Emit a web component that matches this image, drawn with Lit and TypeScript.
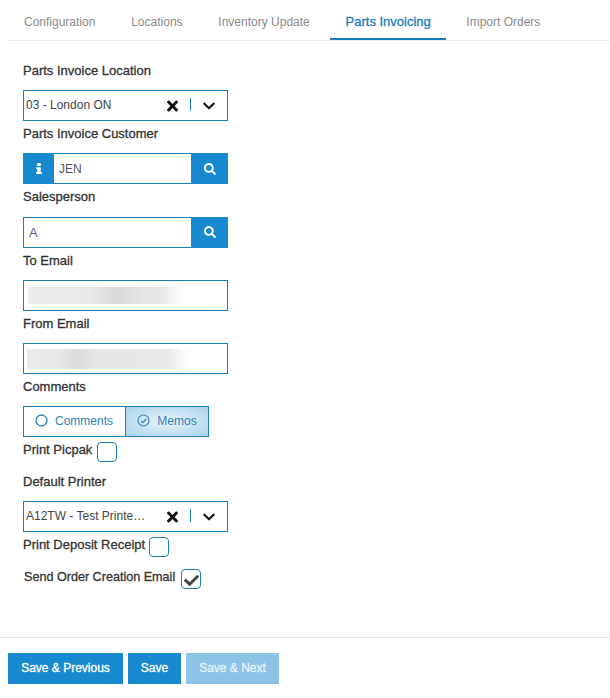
import {LitElement, html, css, svg} from 'lit';
import {customElement} from 'lit/decorators.js';

const timesIcon = html`<svg class="times" viewBox="0 0 352 512"><path d="M242.72 256l100.07-100.07c12.28-12.28 12.28-32.19 0-44.48l-22.24-22.24c-12.28-12.28-32.19-12.28-44.48 0L176 189.28 75.93 89.21c-12.28-12.28-32.19-12.28-44.48 0L9.21 111.45c-12.28 12.28-12.28 32.19 0 44.48L109.28 256 9.21 356.07c-12.28 12.28-12.28 32.19 0 44.48l22.24 22.24c12.28 12.28 32.2 12.28 44.48 0L176 322.72l100.07 100.07c12.28 12.28 32.2 12.28 44.48 0l22.24-22.24c12.28-12.28 12.28-32.19 0-44.48L242.72 256z"/></svg>`;
const chevronIcon = html`<svg class="chevron" viewBox="0 0 448 512"><path d="M207.029 381.476L12.686 187.132c-9.373-9.373-9.373-24.569 0-33.941l22.667-22.667c9.357-9.357 24.522-9.375 33.901-.04L224 284.505l154.745-154.021c9.379-9.335 24.544-9.317 33.901.04l22.667 22.667c9.373 9.373 9.373 24.569 0 33.941L240.971 381.476c-9.373 9.372-24.569 9.372-33.942 0z"/></svg>`;
const searchIcon = html`<svg class="search" viewBox="0 0 512 512"><path d="M505 442.7L405.3 343c-4.5-4.5-10.6-7-17-7H372c27.6-35.3 44-79.7 44-128C416 93.1 322.9 0 208 0S0 93.1 0 208s93.1 208 208 208c48.3 0 92.7-16.4 128-44v16.3c0 6.4 2.5 12.5 7 17l99.7 99.7c9.4 9.4 24.6 9.4 33.9 0l28.3-28.3c9.4-9.4 9.4-24.6.1-34zM208 336c-70.7 0-128-57.2-128-128 0-70.7 57.2-128 128-128 70.7 0 128 57.2 128 128 0 70.7-57.2 128-128 128z"/></svg>`;
const infoIcon = html`<svg class="info" viewBox="0 0 192 512" preserveAspectRatio="none"><path d="M20 424.229h20V279.771H20c-11.046 0-20-8.954-20-20V212c0-11.046 8.954-20 20-20h112c11.046 0 20 8.954 20 20v212.229h20c11.046 0 20 8.954 20 20V492c0 11.046-8.954 20-20 20H20c-11.046 0-20-8.954-20-20v-47.771c0-11.046 8.954-20 20-20zM96 0C56.235 0 24 32.235 24 72s32.235 72 72 72 72-32.235 72-72S135.764 0 96 0z"/></svg>`;
const checkPath = svg`<path d="M173.898 439.404l-166.4-166.4c-9.997-9.997-9.997-26.206 0-36.204l36.203-36.204c9.997-9.998 26.207-9.998 36.204 0L192 312.69 432.095 72.596c9.997-9.997 26.207-9.997 36.204 0l36.203 36.204c9.997 9.997 9.997 26.206 0 36.204l-294.4 294.401c-9.998 9.997-26.207 9.997-36.204-.001z"/>`;

const tabs = ['Configuration', 'Locations', 'Inventory Update', 'Parts Invoicing', 'Import Orders'];

@customElement('app-root')
export class AppRoot extends LitElement {
  static styles = css`
    :host {
      display: flex;
      flex-direction: column;
      min-height: 698px;
      font-family: "Liberation Sans", Arial, sans-serif;
      font-size: 12px;
      color: #333;
      background: #fff;
    }
    .tabs {
      display: flex;
      gap: 3.8px;
      margin-left: 8px;
      height: 41px;
      box-sizing: border-box;
      border-bottom: 1px solid #ececec;
    }
    .tab {
      padding: 15px 16px 0;
      height: 40px;
      box-sizing: border-box;
      color: #8a8a8a;
      line-height: 14px;
    }
    .tab.active {
      color: #1a7cb8;
      font-size: 13px;
      -webkit-text-stroke: 0.3px #1a7cb8;
      border-bottom: 2px solid #1a7cb8;
      width: 116px;
      white-space: nowrap;
      margin-right: 1px;
    }
    .form {
      padding: 22.75px 0 0 23px;
      width: 205px;
    }
    .label {
      height: 14.25px;
      line-height: 14px;
      font-size: 13px;
      -webkit-text-stroke: 0.3px #333;
      color: #333;
      white-space: nowrap;
    }
    .label + .box, .label + .toggle {
      margin-top: 12px;
    }
    .box + .label, .toggle + .label {
      margin-top: 6px;
    }
    .box {
      display: flex;
      align-items: center;
      box-sizing: border-box;
      height: 31px;
      border: 1px solid #1a7cb8;
      background: #fff;
    }
    .value {
      flex: 1;
      min-width: 0;
      padding: 0 0 2px 2px;
      white-space: nowrap;
      overflow: hidden;
      text-overflow: ellipsis;
      color: #444;
    }
    .actions {
      display: flex;
      align-items: center;
      flex: none;
      width: 80px;
      height: 100%;
    }
    .clear {
      width: 36px;
      padding-left: 7px;
      display: flex;
      justify-content: center;
    }
    .divider {
      width: 1px;
      height: 13px;
      margin-bottom: 2px;
      background: #1a7cb8;
    }
    .drop {
      flex: 1;
      display: flex;
      justify-content: center;
    }
    .times { width: 11px; height: 16px; fill: #111; }
    .chevron { width: 12px; height: 14px; fill: #111; margin-top: 1px; }
    .search { width: 12px; height: 12px; fill: #fff; display: block; }
    .info { width: 6px; height: 11px; fill: #fff; display: block; }
    .addon {
      flex: none;
      align-self: stretch;
      margin: -1px;
      display: flex;
      align-items: center;
      justify-content: center;
      background: #178acf;
    }
    .addon.left { width: 31px; margin-right: 0; }
    .addon.right { width: 37px; margin-left: 0; }
    .plain {
      flex: 1;
      padding-left: 5px;
      color: #555;
    }
    .salesperson { color: #5b5f8c; font-size: 13px; }
    .blur {
      height: 17px;
      border-radius: 1px;
    }
    .blur.to {
      margin-left: 4px;
      width: 156px;
      background: linear-gradient(90deg, #ececec 0, #e9e9e9 40%, #d9d9d9 56%, #e4e4e4 72%, #e8e8e8 85%, #fff 100%);
    }
    .blur.from {
      margin-left: 3px;
      width: 163px;
      height: 20px;
      background: linear-gradient(90deg, #ececec 0, #e6e6e6 20%, #dbdbdb 30%, #e6e6e6 42%, #e8e8e8 85%, #fff 100%);
    }
    .toggle {
      display: flex;
      box-sizing: border-box;
      height: 31px;
      width: 186px;
      color: #2d7fb5;
    }
    .opt {
      display: flex;
      align-items: center;
      justify-content: center;
      gap: 7px;
      box-sizing: border-box;
      border: 1px solid #1a7cb8;
    }
    .opt span { padding-bottom: 1px; }
    .opt.a { width: 103px; flex: none; padding-right: 1px; }
    .opt.b {
      width: 84px;
      margin-left: -1px;
      flex: none;
      background: radial-gradient(ellipse at center, #e9f4fa 0, #a9d3eb 100%);
    }
    .opt svg { width: 13px; height: 13px; fill: none; stroke: #2d7fb5; display: block; margin-bottom: 2px; }
    .check-row {
      display: flex;
      gap: 4px;
      height: 20px;
      line-height: 14px;
      white-space: nowrap;
    }
    .check-row span {
      padding-top: 1px;
      font-size: 13px;
      -webkit-text-stroke: 0.3px #333;
    }
    .checkbox {
      width: 20px;
      height: 20px;
      box-sizing: border-box;
      border: 1px solid #1a7cb8;
      border-radius: 4px;
      background: #fff;
      display: flex;
      align-items: center;
      justify-content: center;
    }
    .checkbox svg { width: 15px; height: 15px; fill: #444; margin-top: 2px; }
    .after-toggle { margin-top: 5px; gap: 5px; }
    .after-check { margin-top: 12.5px; }
    .after-box { margin-top: 5px; }
    .send { margin-top: 12px; gap: 6px; }
    .check-row.send span { margin-left: 1px; font-size: 12.6px; }
    .footer {
      margin-top: auto;
      display: flex;
      gap: 5px;
      padding: 15px 8px 14px;
      border-top: 1px solid #e4e4e4;
    }
    .btn {
      height: 31px;
      box-sizing: border-box;
      padding-bottom: 2px;
      display: flex;
      align-items: center;
      justify-content: center;
      background: #178acf;
      color: #fff;
      -webkit-text-stroke: 0.3px #fff;
    }
    .btn.disabled { background: #8bc4e7; color: #e8f3fa; -webkit-text-stroke: 0.3px #e8f3fa; }
  `;

  private select(value: string) {
    return html`<div class="box">
      <div class="value">${value}</div>
      <div class="actions">
        <div class="clear">${timesIcon}</div>
        <div class="divider"></div>
        <div class="drop">${chevronIcon}</div>
      </div>
    </div>`;
  }

  render() {
    return html`
      <div class="tabs">
        ${tabs.map((t) => html`<div class="tab ${t === 'Parts Invoicing' ? 'active' : ''}">${t}</div>`)}
      </div>
      <div class="form">
        <div class="label">Parts Invoice Location</div>
        ${this.select('03 - London ON')}
        <div class="label">Parts Invoice Customer</div>
        <div class="box">
          <div class="addon left">${infoIcon}</div>
          <div class="plain">JEN</div>
          <div class="addon right">${searchIcon}</div>
        </div>
        <div class="label">Salesperson</div>
        <div class="box">
          <div class="plain salesperson">A</div>
          <div class="addon right">${searchIcon}</div>
        </div>
        <div class="label">To Email</div>
        <div class="box"><div class="blur to"></div></div>
        <div class="label">From Email</div>
        <div class="box"><div class="blur from"></div></div>
        <div class="label">Comments</div>
        <div class="toggle">
          <div class="opt a">
            <svg viewBox="0 0 13 13"><circle cx="6.5" cy="6.5" r="5.5" stroke-width="1.3"/></svg>
            <span>Comments</span>
          </div>
          <div class="opt b">
            <svg viewBox="0 0 13 13"><circle cx="6.5" cy="6.5" r="5.5" stroke-width="1.1"/><path d="M4 6.8l1.8 1.8L9.2 5" stroke-width="1.2"/></svg>
            <span>Memos</span>
          </div>
        </div>
        <div class="check-row after-toggle"><span>Print Picpak</span><div class="checkbox"></div></div>
        <div class="label after-check">Default Printer</div>
        ${this.select('A12TW - Test Printer Front')}
        <div class="check-row after-box"><span>Print Deposit Receipt</span><div class="checkbox"></div></div>
        <div class="check-row send"><span>Send Order Creation Email</span>
          <div class="checkbox"><svg viewBox="0 0 512 512">${checkPath}</svg></div>
        </div>
      </div>
      <div class="footer">
        <div class="btn" style="width:115px">Save &amp; Previous</div>
        <div class="btn" style="width:53px">Save</div>
        <div class="btn disabled" style="width:93px">Save &amp; Next</div>
      </div>
    `;
  }
}
